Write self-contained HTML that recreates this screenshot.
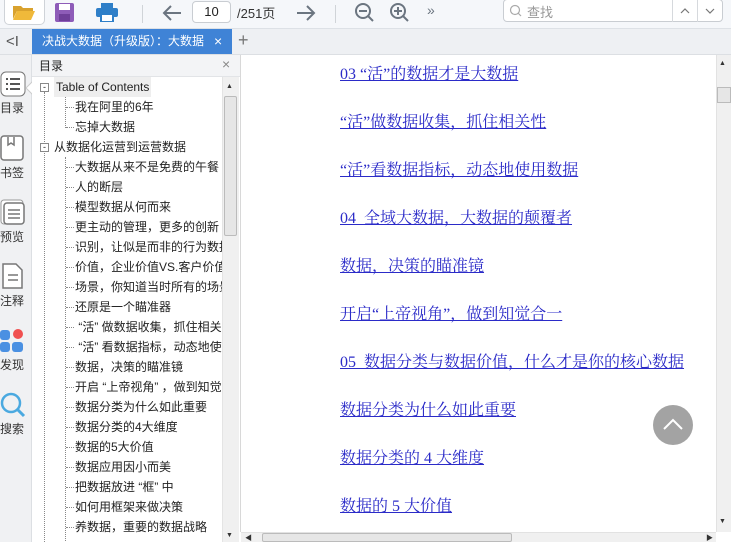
<!DOCTYPE html>
<html><head><meta charset="utf-8"><style>
*{margin:0;padding:0;box-sizing:border-box}
body{width:731px;height:542px;overflow:hidden;background:#fff;font-family:"Liberation Sans","Noto Sans CJK SC",sans-serif;font-size:12px;color:#222;position:relative}
.abs{position:absolute}
#tb{left:0;top:0;width:731px;height:29px;background:#f5f7fa;border-bottom:1px solid #dde1e6}
#tabs{left:0;top:29px;width:731px;height:26px;background:#eef0f3;border-bottom:1px solid #dcdfe3}
#tab{left:32px;top:29px;width:200px;height:25px;background:#3f83d6;color:#fff;font-size:12px;line-height:25px;padding-left:10px;white-space:nowrap;overflow:hidden}
#side{left:0;top:55px;width:32px;height:487px;background:#f0f1f3;border-right:1px solid #dcdfe3}
.sl{position:absolute;left:0;width:32px;text-align:center;font-size:12px;color:#333}
#tochead{left:32px;top:55px;width:208px;height:22px;background:#f3f4f6;border-bottom:1px solid #e2e4e7;font-size:12px;line-height:22px;padding-left:7px}
#toc{left:32px;top:77px;width:190px;height:465px;background:#fff;overflow:hidden}
.ti{position:absolute;white-space:nowrap;font-size:12px;line-height:20px;height:20px}
#tocsb{left:222px;top:77px;width:17px;height:465px;background:#f0f0f0;border-left:1px solid #e4e4e4}
#main{left:240px;top:55px;width:476px;height:477px;background:#fff;border-left:1px solid #d8d8d8}
.lk{position:absolute;left:340px;font-family:"Liberation Serif","Noto Serif CJK SC",serif;font-size:16px;color:#2b2bc8;text-decoration:underline;white-space:nowrap;line-height:20px}
#vsb{left:716px;top:55px;width:15px;height:477px;background:#f0f0f0;border-left:1px solid #e2e2e2}
#hsb{left:241px;top:532px;width:475px;height:10px;background:#f0f0f0;border-top:1px solid #e2e2e2}
</style></head><body>
<div id="tb" class="abs"></div>
<div class="abs" style="left:4px;top:0;width:41px;height:25px;border:1px solid #cfd3d8;border-top:none;border-radius:0 0 5px 5px;background:#fff"></div>
<svg class="abs" style="left:12px;top:3px" width="24" height="18"><path d="M1 3h8l2 2h10v3H5L1 16z" fill="#d9a22e"/><path d="M5 8h18l-4 9H1z" fill="#f0b93a"/></svg>
<svg class="abs" style="left:55px;top:3px" width="19" height="19"><rect x="0" y="0" width="19" height="19" rx="2" fill="#8e5cb8"/><rect x="4" y="1" width="11" height="6" fill="#fff"/><rect x="4" y="11" width="11" height="7" fill="#6f3f99"/></svg>
<svg class="abs" style="left:96px;top:3px" width="22" height="19"><rect x="5" y="0" width="12" height="5" fill="#2f7fc8"/><rect x="0" y="5" width="22" height="9" rx="2" fill="#2f7fc8"/><rect x="5" y="11" width="12" height="8" fill="#fff" stroke="#2f7fc8" stroke-width="2"/></svg>
<div class="abs" style="left:142px;top:5px;width:1px;height:18px;background:#d0d4d8"></div>
<svg class="abs" style="left:162px;top:4px" width="20" height="18"><path d="M19 9H2M9 2L2 9l7 7" fill="none" stroke="#6b7580" stroke-width="2"/></svg>
<div class="abs" style="left:192px;top:1px;width:39px;height:22px;border:1px solid #c9cdd2;border-radius:4px;background:#fff;text-align:center;line-height:20px;font-size:13px">10</div>
<div class="abs" style="left:237px;top:3px;font-size:13px;color:#333">/251页</div>
<svg class="abs" style="left:296px;top:4px" width="20" height="18"><path d="M1 9h17M11 2l7 7-7 7" fill="none" stroke="#6b7580" stroke-width="2"/></svg>
<div class="abs" style="left:335px;top:5px;width:1px;height:18px;background:#d0d4d8"></div>
<svg class="abs" style="left:354px;top:2px" width="22" height="22"><circle cx="9" cy="9" r="7" fill="none" stroke="#6b7580" stroke-width="2"/><path d="M5 9h8M14 14l5 5" stroke="#6b7580" stroke-width="2"/></svg>
<svg class="abs" style="left:389px;top:2px" width="22" height="22"><circle cx="9" cy="9" r="7" fill="none" stroke="#6b7580" stroke-width="2"/><path d="M5 9h8M9 5v8M14 14l5 5" stroke="#6b7580" stroke-width="2"/></svg>
<div class="abs" style="left:427px;top:2px;font-size:14px;color:#6b7580">»</div>
<div class="abs" style="left:503px;top:-1px;width:220px;height:23px;border:1px solid #c9cdd2;border-radius:4px;background:#fff"></div>
<svg class="abs" style="left:509px;top:4px" width="14" height="14"><circle cx="6" cy="6" r="4.5" fill="none" stroke="#aaa" stroke-width="1.2"/><path d="M9 9l3 3" stroke="#aaa" stroke-width="1.2"/></svg>
<div class="abs" style="left:527px;top:2px;font-size:13px;color:#999">查找</div>
<div class="abs" style="left:672px;top:0;width:1px;height:22px;background:#d6d9dd"></div>
<div class="abs" style="left:697px;top:0;width:1px;height:22px;background:#d6d9dd"></div>
<svg class="abs" style="left:680px;top:7px" width="10" height="8"><path d="M1 6l4-4 4 4" fill="none" stroke="#777" stroke-width="1.2"/></svg>
<svg class="abs" style="left:705px;top:7px" width="10" height="8"><path d="M1 2l4 4 4-4" fill="none" stroke="#777" stroke-width="1.2"/></svg>

<div id="tabs" class="abs"></div>
<div class="abs" style="left:6px;top:33px;font-size:15px;color:#555">&lt;I</div>
<div id="tab" class="abs">决战大数据（升级版）：大数据</div>
<div class="abs" style="left:214px;top:29px;color:#fff;font-size:14px;line-height:25px">×</div>
<div class="abs" style="left:238px;top:30px;color:#777;font-size:18px">+</div>

<div id="side" class="abs"></div>
<svg class="abs" style="left:0;top:71px" width="26" height="26"><rect x="1" y="1" width="24" height="24" rx="5" fill="#fff" stroke="#777"/><path d="M6 8h2M10 8h10M6 13h2M10 13h10M6 18h2M10 18h10" stroke="#555" stroke-width="2"/></svg>
<div class="sl" style="top:99px;text-align:left">目录</div>
<svg class="abs" style="left:0;top:135px" width="26" height="26"><rect x="1" y="1" width="22" height="24" rx="3" fill="#fff" stroke="#777" stroke-width="1.5"/><path d="M8 2v8l3-2 3 2V2" fill="none" stroke="#777" stroke-width="1.5"/></svg>
<div class="sl" style="top:164px;text-align:left">书签</div>
<svg class="abs" style="left:0;top:199px" width="26" height="26"><rect x="1" y="1" width="22" height="24" rx="3" fill="#fff" stroke="#999"/><rect x="4" y="4" width="20" height="21" rx="3" fill="#fff" stroke="#777" stroke-width="1.5"/><path d="M8 11h12M8 15h12M8 19h12" stroke="#777" stroke-width="1.5"/></svg>
<div class="sl" style="top:228px;text-align:left">预览</div>
<svg class="abs" style="left:0;top:263px" width="26" height="26"><path d="M3 1h13l6 6v18H3z" fill="#fff" stroke="#777" stroke-width="1.5"/><path d="M8 12h10M8 17h10" stroke="#777" stroke-width="1.5"/></svg>
<div class="sl" style="top:292px;text-align:left">注释</div>
<svg class="abs" style="left:0;top:328px" width="26" height="26"><rect x="0" y="2" width="10" height="10" rx="3" fill="#4a90e2"/><rect x="0" y="14" width="10" height="10" rx="3" fill="#4a90e2"/><rect x="12" y="14" width="11" height="10" rx="3" fill="#4a90e2"/><circle cx="18" cy="6" r="5" fill="#f05050"/></svg>
<div class="sl" style="top:356px;text-align:left">发现</div>
<svg class="abs" style="left:0;top:392px" width="26" height="28"><circle cx="11" cy="11" r="9" fill="none" stroke="#4aa9e0" stroke-width="2.5"/><path d="M18 18l6 6" stroke="#4aa9e0" stroke-width="3"/></svg>
<div class="sl" style="top:420px;text-align:left">搜索</div>
<svg class="abs" style="left:26px;top:81px" width="7" height="14"><path d="M7 0L0 7l7 7" fill="#fff" stroke="#ccc"/></svg>

<div id="tochead" class="abs">目录</div>
<div class="abs" style="left:222px;top:56px;font-size:14px;color:#888">×</div>
<div id="toc" class="abs">
<div class="abs" style="left:12px;top:15px;width:1px;height:460px;border-left:1px dotted #888"></div>
<div class="abs" style="left:33px;top:20px;width:1px;height:31px;border-left:1px dotted #888"></div>
<div class="abs" style="left:33px;top:80px;width:1px;height:400px;border-left:1px dotted #888"></div>
<div class="abs" style="left:8px;top:6px;width:9px;height:9px;border:1px solid #888;background:#fff;font-size:9px;line-height:6px;text-align:center">-</div>
<div class="abs" style="left:8px;top:66px;width:9px;height:9px;border:1px solid #888;background:#fff;font-size:9px;line-height:6px;text-align:center">-</div>
<div class="ti" style="left:22px;top:0;background:#eee;padding:0 2px">Table of Contents</div>
<div class="ti" style="left:22px;top:60px">从数据化运营到运营数据</div>
<div id="l2"></div>
</div>
<script>
var items=["我在阿里的6年","忘掉大数据",null,"大数据从来不是免费的午餐","人的断层","模型数据从何而来","更主动的管理，更多的创新","识别，让似是而非的行为数据","价值，企业价值VS.客户价值","场景，你知道当时所有的场景","还原是一个瞄准器","&nbsp;“活” 做数据收集，抓住相关性","&nbsp;“活” 看数据指标，动态地使用","数据，决策的瞄准镜","开启 “上帝视角” ，做到知觉合一","数据分类为什么如此重要","数据分类的4大维度","数据的5大价值","数据应用因小而美","把数据放进 “框” 中","如何用框架来做决策","养数据，重要的数据战略"];
var h="";for(var i=0;i<items.length;i++){if(!items[i])continue;var t=20+i*20;h+='<div class="abs" style="left:34px;top:'+(t+10)+'px;width:8px;border-top:1px dotted #888"></div><div class="ti" style="left:43px;top:'+t+'px">'+items[i]+'</div>';}
document.getElementById("l2").innerHTML=h;
</script>
<div id="tocsb" class="abs"></div>
<div class="abs" style="left:226px;top:83px;font-size:7px;color:#333">▲</div>
<div class="abs" style="left:224px;top:96px;width:13px;height:140px;background:#e6e6e6;border:1px solid #bbb;border-radius:2px"></div>
<div class="abs" style="left:226px;top:532px;font-size:7px;color:#333">▼</div>

<div id="main" class="abs"></div>
<div class="lk" style="top:65px">03 “活”的数据才是大数据</div>
<div class="lk" style="top:113px">“活”做数据收集，抓住相关性</div>
<div class="lk" style="top:161px">“活”看数据指标，动态地使用数据</div>
<div class="lk" style="top:209px">04&nbsp; 全域大数据，大数据的颠覆者</div>
<div class="lk" style="top:257px">数据，决策的瞄准镜</div>
<div class="lk" style="top:305px">开启“上帝视角”，做到知觉合一</div>
<div class="lk" style="top:353px">05&nbsp; 数据分类与数据价值，什么才是你的核心数据</div>
<div class="lk" style="top:401px">数据分类为什么如此重要</div>
<div class="lk" style="top:449px">数据分类的 4 大维度</div>
<div class="lk" style="top:497px">数据的 5 大价值</div>
<div class="abs" style="left:653px;top:405px;width:40px;height:40px;border-radius:50%;background:#a3a3a3"></div>
<svg class="abs" style="left:653px;top:405px" width="40" height="40"><path d="M11 24l9-9 9 9" fill="none" stroke="#fff" stroke-width="2"/></svg>
<div id="vsb" class="abs"></div>
<div class="abs" style="left:719px;top:60px;font-size:7px;color:#333">▲</div>
<div class="abs" style="left:717px;top:87px;width:14px;height:16px;background:#e6e6e6;border:1px solid #bbb"></div>
<div class="abs" style="left:719px;top:518px;font-size:7px;color:#333">▼</div>
<div id="hsb" class="abs"></div>
<div class="abs" style="left:245px;top:533px;font-size:7px;color:#333">◀</div>
<div class="abs" style="left:262px;top:533px;width:250px;height:9px;background:#e6e6e6;border:1px solid #bbb;border-radius:2px"></div>
<div class="abs" style="left:706px;top:533px;font-size:7px;color:#333">▶</div>
</body></html>
